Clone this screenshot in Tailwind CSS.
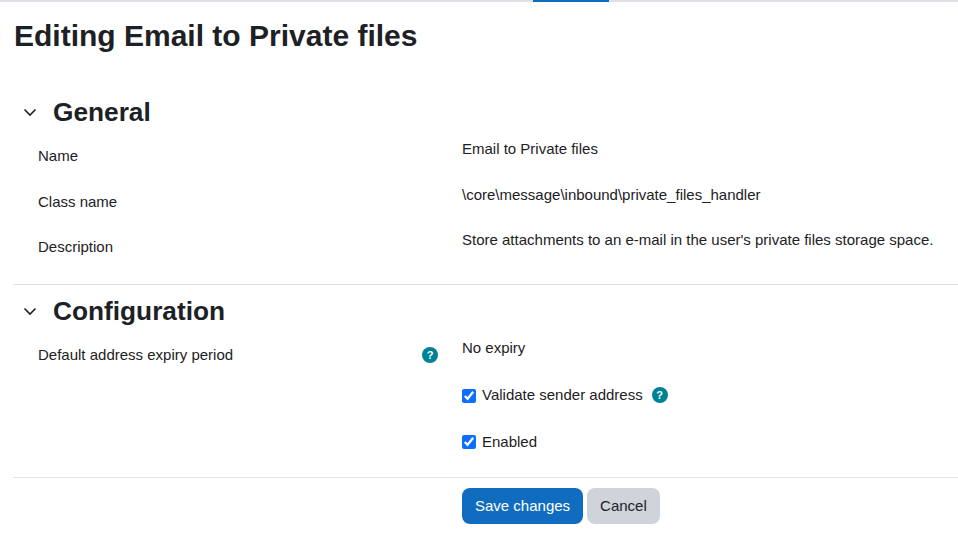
<!DOCTYPE html>
<html>
<head>
<title>Editing Email to Private files</title>
<script src="https://cdn.jsdelivr.net/npm/@tailwindcss/browser@4"></script>
</head>
<body class="bg-white text-[#1d2125] font-['Liberation_Sans',Arial,sans-serif] text-[15px] leading-[22.5px] overflow-hidden">
<div class="h-[551px] w-[958px] overflow-hidden">
  <!-- top nav border -->
  <div class="h-[2px] bg-[#dee2e6] flex">
    <div class="ml-[533px] w-[76px] h-[2px] bg-[#0f6cbf]"></div>
  </div>
  <div class="pl-[13px]">
    <h1 class="text-[30px] leading-[36px] font-bold mt-[16px] mb-[43px] ml-px">Editing Email to Private files</h1>

    <section class="pb-[11px] border-b border-[#dee2e6]">
      <div class="flex items-center h-[30px]">
        <svg class="ml-[9px] w-[16px] h-[16px]" viewBox="0 0 16 16" fill="none" stroke="#1d2125" stroke-width="1.6"><path d="M2.5 5.5 8 11l5.5-5.5"/></svg>
        <h2 class="ml-[15px] text-[26.25px] leading-[30px] font-bold">General</h2>
      </div>
      <div class="mt-[10px] flex flex-col">
        <div class="flex h-[46px]">
          <div class="w-[449px] pl-[25px] pt-[8px]">Name</div>
          <div class="mt-px">Email to Private files</div>
        </div>
        <div class="flex h-[45px]">
          <div class="w-[449px] pl-[25px] pt-[8px]">Class name</div>
          <div class="mt-px">\core\message\inbound\private_files_handler</div>
        </div>
        <div class="flex h-[45px]">
          <div class="w-[449px] pl-[25px] pt-[8px]">Description</div>
          <div class="mt-px">Store attachments to an e-mail in the user's private files storage space.</div>
        </div>
      </div>
    </section>

    <section class="pb-[24px] border-b border-[#dee2e6]">
      <div class="flex items-center h-[30px] mt-[11px]">
        <svg class="ml-[9px] w-[16px] h-[16px]" viewBox="0 0 16 16" fill="none" stroke="#1d2125" stroke-width="1.6"><path d="M2.5 5.5 8 11l5.5-5.5"/></svg>
        <h2 class="ml-[15px] text-[26.25px] leading-[30px] font-bold">Configuration</h2>
      </div>
      <div class="mt-[10px] flex">
        <div class="w-[449px] pl-[25px] pt-[8px] flex justify-between items-start pr-[24px]">
          <span>Default address expiry period</span>
          <span class="w-[16px] h-[16px] mt-[3px] rounded-full bg-[#008196] text-white text-[11px] leading-[16px] font-bold text-center">?</span>
        </div>
        <div class="flex flex-col">
          <div class="h-[48px] mt-px">No expiry</div>
          <label class="flex items-center h-[22px] mb-[24px]">
            <input type="checkbox" checked class="w-[14px] h-[14px] accent-[#0d6efd] m-0">
            <span class="ml-[6px] mb-[2px]">Validate sender address</span>
            <span class="ml-[9px] mb-[2px] w-[16px] h-[16px] rounded-full bg-[#008196] text-white text-[11px] leading-[16px] font-bold text-center">?</span>
          </label>
          <label class="flex items-center h-[22px]">
            <input type="checkbox" checked class="w-[14px] h-[14px] accent-[#0d6efd] m-0">
            <span class="ml-[6px]">Enabled</span>
          </label>
        </div>
      </div>
    </section>

    <div class="mt-[10px] ml-[449px] flex gap-[4px]">
      <button class="h-[36px] px-[13px] rounded-[8px] bg-[#0f6cbf] text-white">Save changes</button>
      <button class="h-[36px] px-[13px] rounded-[8px] bg-[#ced4da] text-[#1d2125]">Cancel</button>
    </div>
  </div>
</div>
</body>
</html>
